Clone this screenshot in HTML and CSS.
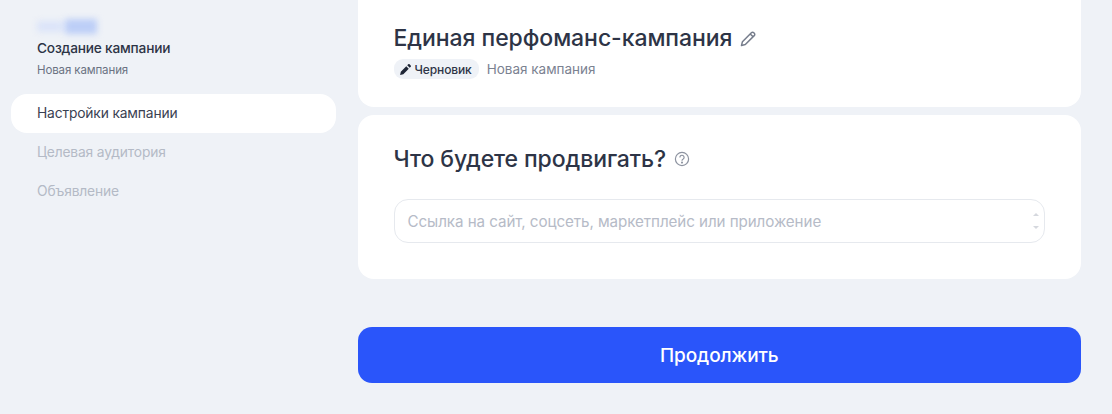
FILE: index.html
```html
<!DOCTYPE html>
<html lang="ru">
<head>
<meta charset="utf-8">
<title>Создание кампании</title>
<link rel="stylesheet" href="styles.css">
</head>
<body>
<div class="page">
  <aside class="sidebar">
    <div class="blurred"><span class="blur-a"></span><span class="blur-b"></span></div>
    <div class="side-title">Создание кампании</div>
    <div class="side-sub">Новая кампания</div>
    <nav class="nav">
      <div class="nav-item active">Настройки кампании</div>
      <div class="nav-item">Целевая аудитория</div>
      <div class="nav-item">Объявление</div>
    </nav>
  </aside>
  <main class="main">
    <section class="card card-head">
      <div class="title-row">
        <h1 class="title">Единая перфоманс-кампания</h1>
        <svg class="edit-icon" viewBox="0 0 16 16" width="17" height="17" fill="none" stroke="#767d8c" stroke-width="1.4" stroke-linejoin="round"><path d="M1.4 14.6l.9-3.6 8.4-8.4a1.6 1.6 0 0 1 2.3 0l.4.4a1.6 1.6 0 0 1 0 2.3L5 13.7z"/><path d="M9.6 3.7l2.7 2.7"/></svg>
      </div>
      <div class="meta-row">
        <span class="badge">
          <svg class="badge-icon" viewBox="0 0 12 12" width="13" height="13" fill="#1f2636"><path d="M1 11l.7-3 5-5 2.3 2.3-5 5zM7.6 2.1l.9-.9a.9.9 0 0 1 1.3 0l1 1a.9.9 0 0 1 0 1.3l-.9.9z"/></svg>
          Черновик
        </span>
        <span class="meta-text">Новая кампания</span>
      </div>
    </section>
    <section class="card card-promo">
      <div class="promo-row">
        <h2 class="promo-title">Что будете продвигать?</h2>
        <svg class="help-icon" viewBox="0 0 16 16" width="16" height="16" fill="none" stroke="#8d93a0" stroke-width="1.2"><circle cx="8" cy="8" r="6.6"/><path d="M5.9 6.4a2.1 2.1 0 1 1 3.3 1.7c-.8.5-1.2.9-1.2 1.6"/><circle cx="8" cy="11.6" r=".45" fill="#8d93a0"/></svg>
      </div>
      <div class="field">
        <span class="placeholder">Ссылка на сайт, соцсеть, маркетплейс или приложение</span>
        <span class="spin"><i class="up"></i><i class="down"></i></span>
      </div>
    </section>
    <button class="submit" type="button">Продолжить</button>
  </main>
</div>
</body>
</html>
```
FILE: styles.css
```css
* { box-sizing: border-box; }
html, body { margin: 0; height: 100%; }
body {
  background: #eff2f7;
  font-family: Inter, "Noto Sans", sans-serif;
  color: #1f2636;
  overflow: hidden;
}
.page {
  display: flex;
  width: 1112px;
  height: 414px;
  overflow: hidden;
}
.sidebar {
  width: 357.5px;
  flex: none;
  padding: 18px 22px 0 11px;
}
.blurred {
  display: flex;
  gap: 2px;
  align-items: center;
  height: 17px;
  margin-left: 26px;
  filter: blur(3px);
}
.blur-a { width: 26px; height: 11px; background: #dbe4f9; }
.blur-b { width: 32px; height: 15px; background: #bccef7; }
.side-title {
  margin: 3px 0 0 26px;
  font-size: 13.7px;
  line-height: 20px;
  font-weight: 500;
  letter-spacing: -0.2px;
  color: #2d3446;
}
.side-sub {
  margin: 4px 0 0 26px;
  font-size: 11.5px;
  line-height: 16px;
  letter-spacing: -0.12px;
  color: #6b7283;
}
.nav { margin-top: 15.5px; display: flex; flex-direction: column; }
.nav-item {
  height: 39px;
  padding-left: 26px;
  font-size: 13.8px;
  line-height: 38px;
  letter-spacing: -0.15px;
  color: #b4bac6;
  border-radius: 16px;
}
.nav-item.active { background: #fff; color: #3a4152; }
.main {
  width: 723.5px;
  flex: none;
  display: flex;
  flex-direction: column;
}
.card { background: #fff; border-radius: 16px; padding: 0 36px; }
.card-head {
  height: 127px;
  margin-top: -20px;
  padding-top: 43px;
}
.title-row { display: flex; align-items: center; gap: 8px; height: 30px; }
.title {
  margin: 0;
  font-size: 23px;
  line-height: 30px;
  font-weight: 500;
  letter-spacing: -0.06px;
  color: #2d3446;
}
.edit-icon { flex: none; }
.meta-row { display: flex; align-items: center; gap: 8px; margin-top: 6px; }
.badge {
  display: inline-flex;
  align-items: center;
  gap: 3px;
  height: 20px;
  padding: 0 7px 0 5px;
  border-radius: 9px;
  background: #eff2f7;
  font-size: 12px;
  font-weight: 500;
  letter-spacing: -0.12px;
  color: #2d3446;
}
.badge-icon { flex: none; }
.meta-text { font-size: 13.5px; letter-spacing: 0; color: #7b8291; }
.card-promo {
  height: 164px;
  margin-top: 8px;
  padding-top: 29px;
}
.promo-row { display: flex; align-items: center; gap: 8px; height: 30px; }
.promo-title {
  margin: 0;
  font-size: 23px;
  line-height: 30px;
  font-weight: 500;
  letter-spacing: -0.1px;
  color: #2d3446;
}
.help-icon { flex: none; }
.field {
  display: flex;
  align-items: center;
  justify-content: space-between;
  height: 44px;
  margin-top: 25px;
  padding: 0 5px 0 13px;
  border: 1.5px solid #e6e9ee;
  border-radius: 14px;
}
.placeholder { font-size: 15.2px; letter-spacing: -0.08px; color: #b6bbc7; }
.spin { display: flex; flex-direction: column; gap: 10px; }
.spin i { display: block; width: 0; height: 0; border-left: 3px solid transparent; border-right: 3px solid transparent; }
.spin .up { border-bottom: 3px solid #d5d8de; }
.spin .down { border-top: 3px solid #d5d8de; }
.submit {
  height: 56px;
  margin-top: 48px;
  border: 0;
  border-radius: 14px;
  background: #2a55fa;
  color: #fff;
  font: 500 19px Inter, "Noto Sans", sans-serif;
  letter-spacing: -0.1px;
}
```
